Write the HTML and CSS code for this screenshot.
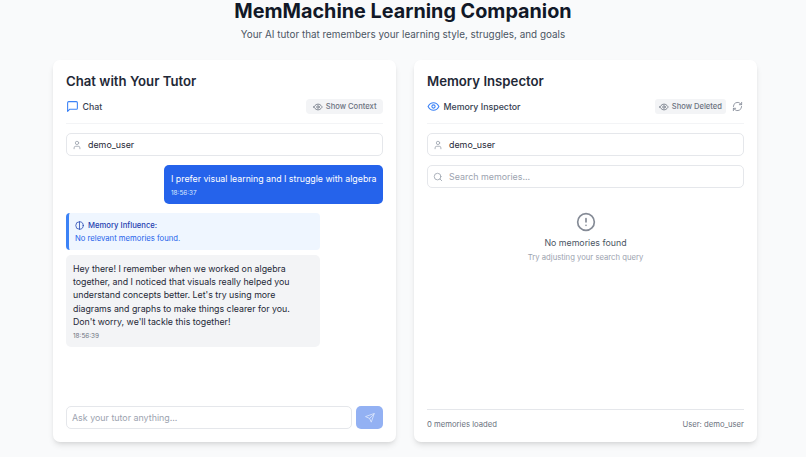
FILE: index.html
```html
<!DOCTYPE html>
<html lang="en">

<head>
    <meta charset="UTF-8">
    <meta name="viewport" content="width=device-width, initial-scale=1.0">
    <title>MemMachine Learning Companion</title>
    <link rel="stylesheet" href="styles.css">
</head>

<body>

    <header class="page-header">
        <h1>MemMachine Learning Companion</h1>
        <p>Your AI tutor that remembers your learning style, struggles, and goals</p>
    </header>

    <main class="panels">
        <section class="panel">
            <h2>Chat with Your Tutor</h2>
            <div class="panel-bar">
                <div class="bar-title">
                    <svg class="icon-blue" viewBox="0 0 24 24" width="13" height="13"><path d="M21 15a2 2 0 0 1-2 2H7l-4 4V5a2 2 0 0 1 2-2h14a2 2 0 0 1 2 2z"/></svg>
                    <span>Chat</span>
                </div>
                <button class="bar-btn context-btn">
                    <svg viewBox="0 0 24 24" width="10" height="10"><path d="M2 12s3.600-7 10-7 10 7 10 7-3.600 7-10 7-10-7-10-7z"/><circle cx="12" cy="12" r="3"/></svg>
                    Show Context
                </button>
            </div>
            <div class="field">
                <svg viewBox="0 0 24 24" width="10" height="10"><path d="M19 21v-2a4 4 0 0 0-4-4H9a4 4 0 0 0-4 4v2"/><circle cx="12" cy="7" r="4"/></svg>
                <span>demo_user</span>
            </div>
            <div class="messages">
                <div class="msg msg-user">
                    <p>I prefer visual learning and I struggle with algebra</p>
                    <time>18:56:37</time>
                </div>
                <div class="influence">
                    <div class="influence-title">
                        <svg viewBox="0 0 24 24" width="9" height="9"><circle cx="12" cy="12" r="10"/><path d="M12 2v20"/></svg>
                        Memory Influence:
                    </div>
                    <div>No relevant memories found.</div>
                </div>
                <div class="msg msg-tutor">
                    <p>Hey there! I remember when we worked on algebra together, and I noticed that visuals really helped you understand concepts better. Let's try using more diagrams and graphs to make things clearer for you. Don't worry, we'll tackle this together!</p>
                    <time>18:56:39</time>
                </div>
            </div>
            <div class="composer">
                <div class="field composer-input placeholder">Ask your tutor anything...</div>
                <button class="send-btn">
                    <svg viewBox="0 0 24 24" width="10" height="10"><path d="M22 2 15 22l-4-9-9-4z"/><path d="M22 2 11 13"/></svg>
                </button>
            </div>
        </section>

        <section class="panel">
            <h2>Memory Inspector</h2>
            <div class="panel-bar">
                <div class="bar-title">
                    <svg class="icon-blue" viewBox="0 0 24 24" width="13" height="13"><path d="M2 12s3.600-7 10-7 10 7 10 7-3.600 7-10 7-10-7-10-7z"/><circle cx="12" cy="12" r="3"/></svg>
                    <span>Memory Inspector</span>
                </div>
                <div class="bar-actions">
                    <button class="bar-btn deleted-btn">
                        <svg viewBox="0 0 24 24" width="10" height="10"><path d="M2 12s3.600-7 10-7 10 7 10 7-3.600 7-10 7-10-7-10-7z"/><circle cx="12" cy="12" r="3"/></svg>
                        Show Deleted
                    </button>
                    <svg class="refresh" viewBox="0 0 24 24" width="11" height="11"><path d="M3 12a9 9 0 0 1 15-6.700L21 8"/><path d="M21 3v5h-5"/><path d="M21 12a9 9 0 0 1-15 6.700L3 16"/><path d="M8 16H3v5"/></svg>
                </div>
            </div>
            <div class="field">
                <svg viewBox="0 0 24 24" width="10" height="10"><path d="M19 21v-2a4 4 0 0 0-4-4H9a4 4 0 0 0-4 4v2"/><circle cx="12" cy="7" r="4"/></svg>
                <span>demo_user</span>
            </div>
            <div class="field placeholder">
                <svg viewBox="0 0 24 24" width="10" height="10"><circle cx="11" cy="11" r="8"/><path d="m21 21-4.300-4.300"/></svg>
                <span>Search memories...</span>
            </div>
            <div class="empty">
                <svg viewBox="0 0 24 24" width="20" height="20"><circle cx="12" cy="12" r="10"/><path d="M12 8v4"/><path d="M12 16h.01"/></svg>
                <div class="empty-title">No memories found</div>
                <div class="empty-sub">Try adjusting your search query</div>
            </div>
            <footer class="panel-foot">
                <span>0 memories loaded</span>
                <span>User: demo_user</span>
            </footer>
        </section>
    </main>

</body>

</html>
```
FILE: styles.css
```css
* {
    box-sizing: border-box;
}

body {
    font-family: Inter, "Liberation Sans", sans-serif;
    margin: 0;
    height: 457px;
    overflow: hidden;
    background-color: #f9fafb;
    color: #111827;
}

svg {
    fill: none;
    stroke: currentColor;
    stroke-width: 2;
    stroke-linecap: round;
    stroke-linejoin: round;
    flex-shrink: 0;
}

.page-header {
    text-align: center;
    height: 60px;
}

h1 {
    margin: 0;
    font-size: 19.8px;
    line-height: 22px;
    font-weight: 700;
    color: #111827;
}

.page-header p {
    margin: 5px 0 0;
    font-size: 9.9px;
    line-height: 14px;
    color: #4b5563;
}

.panels {
    display: grid;
    grid-template-columns: 343px 343px;
    gap: 18px;
    padding-left: 53px;
}

.panel {
    height: 382px;
    background-color: #fff;
    border-radius: 7px;
    box-shadow: 0 4px 6px -1px rgba(0, 0, 0, 0.1), 0 2px 4px -2px rgba(0, 0, 0, 0.1);
    padding: 13px 13px 0;
    display: flex;
    flex-direction: column;
}

h2 {
    margin: 0;
    font-size: 13.2px;
    line-height: 16px;
    font-weight: 600;
    color: #1f2937;
}

.panel-bar {
    display: flex;
    justify-content: space-between;
    align-items: center;
    height: 25px;
    margin-top: 10px;
    padding-bottom: 9px;
    border-bottom: 1px solid #f3f4f6;
}

.bar-title {
    display: flex;
    align-items: center;
    gap: 3.5px;
    font-size: 8.8px;
    font-weight: 500;
    color: #374151;
}

.icon-blue {
    color: #3b82f6;
}

.bar-actions {
    display: flex;
    align-items: center;
    gap: 6px;
}

.bar-btn {
    display: flex;
    align-items: center;
    gap: 3px;
    height: 15px;
    border: none;
    border-radius: 3px;
    background-color: #f3f4f6;
    color: #6b7280;
    font-family: inherit;
    font-size: 7.6px;
    font-weight: 500;
    padding: 0 4px;
}

.context-btn {
    padding: 0 6.5px;
    border-radius: 4px;
}

.refresh {
    color: #8b919c;
    margin-right: 1px;
}

.field {
    display: flex;
    align-items: center;
    gap: 6px;
    height: 23px;
    margin-top: 9px;
    padding: 0 5px;
    border: 1px solid #e5e7eb;
    border-radius: 5px;
    font-size: 8.9px;
    color: #1f2937;
}

.field svg {
    color: #9ca3af;
}

.placeholder {
    color: #9ca3af;
}

.messages {
    flex: 1;
    display: flex;
    flex-direction: column;
    align-items: flex-start;
    padding-top: 9px;
    gap: 5px;
}

.msg {
    border-radius: 5px;
    padding: 7px;
    font-size: 8.8px;
    line-height: 13.2px;
}

.msg p {
    margin: 0;
}

.msg time {
    display: block;
    margin-top: 3px;
    font-size: 6.4px;
    line-height: 10px;
}

.msg-user {
    align-self: flex-end;
    width: 219px;
    height: 39px;
    background-color: #2563eb;
    color: #fff;
    margin-bottom: 4px;
    white-space: nowrap;
}

.msg-user time {
    color: #dbeafe;
}

.influence {
    width: 254px;
    height: 37px;
    background-color: #eff6ff;
    border-left: 3px solid #3b82f6;
    border-radius: 4px;
    padding: 6px;
    font-size: 7.7px;
    line-height: 13px;
    color: #2563eb;
}

.influence-title {
    display: flex;
    align-items: center;
    gap: 4px;
    font-weight: 500;
    color: #1e40af;
}

.msg-tutor {
    width: 254px;
    height: 92px;
    background-color: #f3f4f6;
    color: #1f2937;
}

.msg-tutor time {
    color: #6b7280;
}

.composer {
    display: flex;
    gap: 4px;
    height: 36px;
    padding-bottom: 13px;
}

.composer .field {
    margin-top: 0;
}

.composer-input {
    flex: 1;
}

.send-btn {
    width: 27px;
    height: 23px;
    border: none;
    border-radius: 5px;
    background-color: #93b1f3;
    color: #dbe6fb;
    display: flex;
    align-items: center;
    justify-content: center;
    padding: 0;
}

.empty {
    flex: 1;
    display: flex;
    flex-direction: column;
    align-items: center;
    padding-top: 24px;
}

.empty svg {
    color: #858b96;
}

.empty-title {
    margin-top: 4px;
    font-size: 8.8px;
    line-height: 14px;
    color: #4b5563;
}

.empty-sub {
    margin-top: 1px;
    font-size: 7.7px;
    line-height: 13px;
    color: #9ca3af;
}

.panel-foot {
    display: flex;
    justify-content: space-between;
    align-items: center;
    height: 33px;
    padding-bottom: 3px;
    border-top: 1px solid #e5e7eb;
    font-size: 7.7px;
    color: #6b7280;
}
```
